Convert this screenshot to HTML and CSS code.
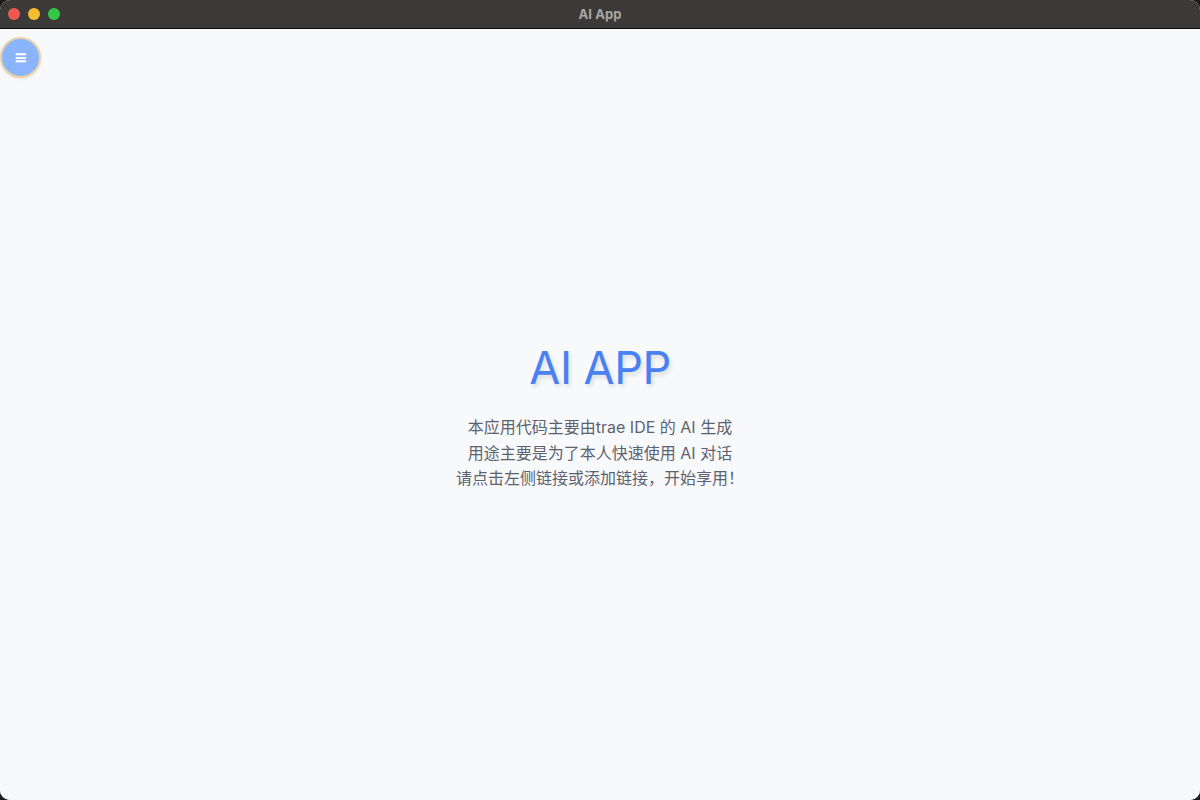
FILE: index.html
```html
<!DOCTYPE html>
<html lang="zh-CN">
<head>
<meta charset="utf-8">
<title>AI App</title>
<link rel="stylesheet" href="styles.css">
</head>
<body>
<div class="window">
  <header class="titlebar">
    <div class="lights">
      <span class="light red"></span>
      <span class="light yellow"></span>
      <span class="light green"></span>
    </div>
    <div class="title">AI App</div>
  </header>
  <main class="content">
    <button class="menu-btn" aria-label="menu">&#8801;</button>
    <section class="hero">
      <h1 class="hero-title">AI APP</h1>
      <p class="hero-text">本应用代码主要由trae IDE 的 AI 生成<br>用途主要是为了本人快速使用 AI 对话<br>请点击左侧链接或添加链接，开始享用！</p>
    </section>
  </main>
</div>
</body>
</html>
```

FILE: styles.css
```css
html, body {
  margin: 0;
  padding: 0;
  width: 1200px;
  height: 800px;
  background: #1e1c1b;
  overflow: hidden;
}

.window {
  width: 1200px;
  height: 800px;
  border-radius: 10px;
  overflow: hidden;
  display: flex;
  flex-direction: column;
  background: #f8f9fb;
}

.titlebar {
  height: 28px;
  flex: 0 0 28px;
  background: #3c3a38;
  border-bottom: 1px solid #0c0c0c;
  position: relative;
  display: flex;
  align-items: center;
  justify-content: center;
}

.lights {
  position: absolute;
  left: 8px;
  top: 8px;
  display: flex;
  gap: 8px;
}

.light {
  width: 12px;
  height: 12px;
  border-radius: 50%;
  display: block;
}
.light.red { background: #ee5a52; }
.light.yellow { background: #f4bd2f; }
.light.green { background: #33c748; }

.title {
  font-family: Inter, "Liberation Sans", sans-serif;
  font-weight: 700;
  font-size: 13px;
  color: #a9a7a5;
  letter-spacing: 0.1px;
}

.content {
  flex: 1;
  position: relative;
  display: flex;
  align-items: center;
  justify-content: center;
  background: #f8f9fb;
}

.menu-btn {
  position: absolute;
  left: 0;
  top: 8px;
  width: 41px;
  height: 41px;
  border-radius: 50%;
  border: 2px solid #ead2a6;
  background: #8ab4fc;
  color: #ffffff;
  font-family: "DejaVu Sans", sans-serif;
  font-size: 16px;
  font-weight: 700;
  line-height: 1;
  padding: 0;
  display: flex;
  align-items: center;
  justify-content: center;
  box-shadow: 0 1px 3px rgba(0,0,0,0.08);
}

.hero {
  text-align: center;
  margin-top: 4px;
}

.hero-title {
  margin: 0;
  font-family: Inter, "Noto Sans", sans-serif;
  font-weight: 400;
  font-size: 45px;
  line-height: 54px;
  color: #4a81f2;
  letter-spacing: -0.5px;
  text-shadow: 2px 3px 4px rgba(0,0,0,0.12);
}

.hero-text {
  margin: 20px 0 0;
  font-family: Inter, "Noto Sans CJK SC", sans-serif;
  font-size: 16px;
  line-height: 25.5px;
  color: #5c6370;
}
```
